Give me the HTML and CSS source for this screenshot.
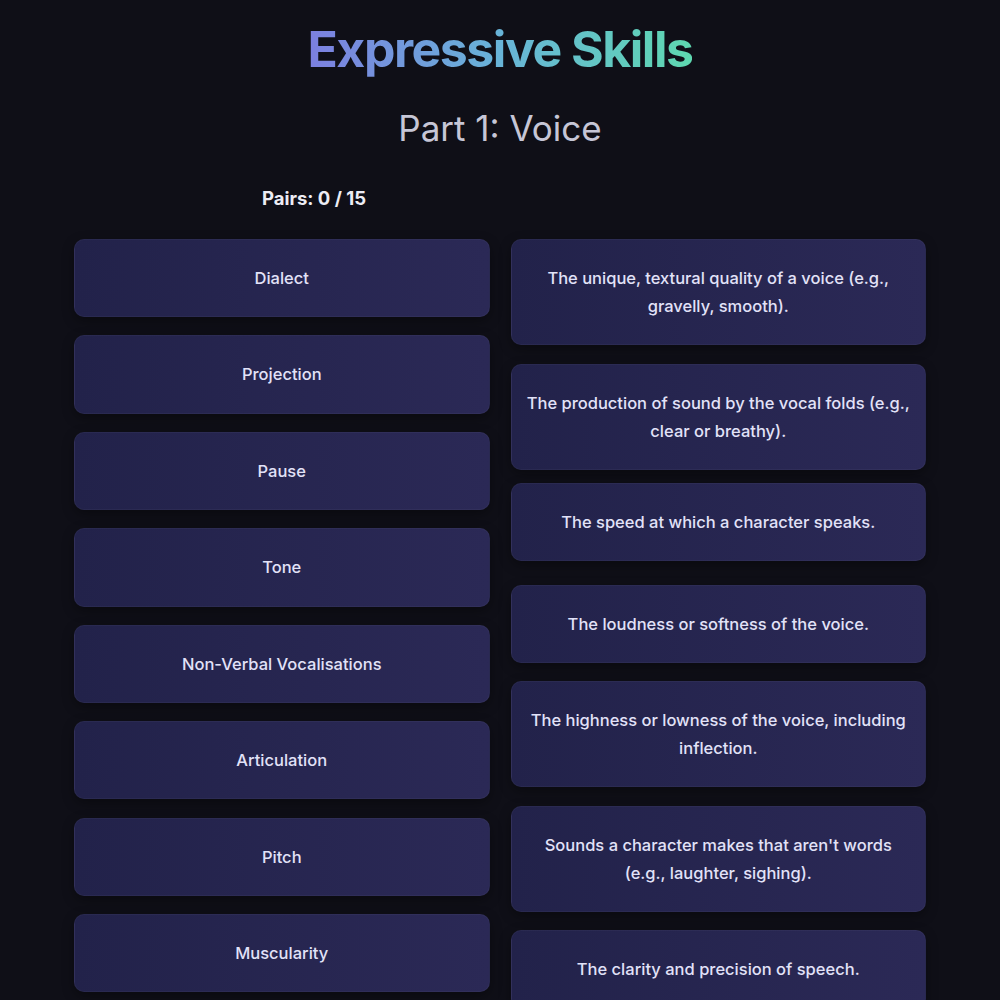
FILE: index.html
```html
<!DOCTYPE html>
<html lang="en">
<head>
<meta charset="utf-8">
<title>Expressive Skills</title>
<link rel="stylesheet" href="styles.css">
</head>
<body>
<main class="page">
  <header class="header">
    <h1 class="title">Expressive Skills</h1>
    <h2 class="subtitle">Part 1: Voice</h2>
  </header>
  <div class="stats-row">
    <div class="stat">Pairs: 0 / 15</div>
  </div>
  <div class="board">
    <div class="column">
      <div class="card">Dialect</div>
      <div class="card">Projection</div>
      <div class="card">Pause</div>
      <div class="card">Tone</div>
      <div class="card">Non-Verbal Vocalisations</div>
      <div class="card">Articulation</div>
      <div class="card">Pitch</div>
      <div class="card">Muscularity</div>
    </div>
    <div class="column">
      <div class="card">The unique, textural quality of a voice (e.g., gravelly, smooth).</div>
      <div class="card">The production of sound by the vocal folds (e.g., clear or breathy).</div>
      <div class="card lifted">The speed at which a character speaks.</div>
      <div class="card">The loudness or softness of the voice.</div>
      <div class="card">The highness or lowness of the voice, including inflection.</div>
      <div class="card">Sounds a character makes that aren't words (e.g., laughter, sighing).</div>
      <div class="card">The clarity and precision of speech.</div>
    </div>
  </div>
</main>
</body>
</html>
```
FILE: styles.css
```css
* { box-sizing: border-box; }
html, body {
  margin: 0;
  padding: 0;
  background: #0f0f17;
}
body {
  font-family: Inter, "Noto Sans", sans-serif;
  color: #e4e4f4;
  overflow: hidden;
}
.page {
  width: 852px;
  margin: 0 auto;
  padding-top: 17px;
}
.header {
  text-align: center;
}
.title {
  margin: 0;
  font-size: 50px;
  line-height: 64px;
  font-weight: 700;
  letter-spacing: -1.5px;
  background: linear-gradient(90deg, #7c7fe0 0%, #68b4d8 50%, #5ed8b0 100%);
  -webkit-background-clip: text;
  background-clip: text;
  color: transparent;
  display: inline-block;
}
.subtitle {
  margin: 23px 0 0;
  font-size: 35px;
  line-height: 48px;
  font-weight: 400;
  color: #c6c6d6;
}
.stats-row {
  display: flex;
  margin-top: 31px;
}
.stat {
  width: 480px;
  text-align: center;
  font-size: 18.5px;
  line-height: 30px;
  font-weight: 700;
  color: #ececf4;
}
.board {
  display: grid;
  grid-template-columns: 1fr 1fr;
  gap: 21px;
  margin-top: 26px;
}
.column {
  display: flex;
  flex-direction: column;
  gap: 18.3px;
}
.card {
  padding: 24px 14px;
  border: 1px solid rgba(255, 255, 255, 0.035);
  border-radius: 10px;
  background: linear-gradient(90deg, #22224a 0%, #2b2956 100%);
  box-shadow: 0 4px 12px rgba(0, 0, 0, 0.35);
  text-align: center;
  font-size: 16.5px;
  line-height: 28.16px;
  font-weight: 500;
  color: #e2e2f8;
}
.lifted {
  transform: translateY(-5px);
}
```
